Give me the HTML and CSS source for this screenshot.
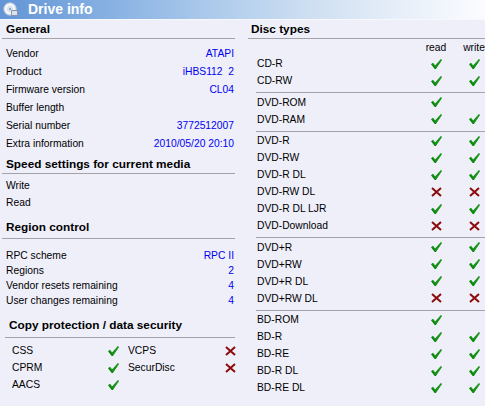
FILE: index.html
```html
<!DOCTYPE html>
<html>
<head>
<meta charset="utf-8">
<link rel="stylesheet" href="styles.css">
</head>
<body>
<svg class="defs" width="0" height="0">
  <symbol id="ok" viewBox="0 0 11 10">
    <path d="M0,5.3 L2,3.8 L4.1,6.4 L9.9,0 L11,1.1 L4.9,10 L3.7,10 Z" fill="#0a850a"/>
    <path d="M1,5.2 L2,4.6 L4.2,7.4 L9.9,1 L10.3,1.3 L4.5,9" fill="none" stroke="#2aa82a" stroke-width="0.6"/>
  </symbol>
  <symbol id="no" viewBox="0 0 11 10">
    <path d="M1,1 L10,9 M10,1 L1,9" stroke="#8c0a0a" stroke-width="2" fill="none"/>
  </symbol>
</svg>
<div class="titlebar">
  <svg class="ticon" width="15" height="15" viewBox="0 0 15 15">
    <circle cx="7" cy="7" r="6.2" fill="#f2f5fa" stroke="#b5c5da" stroke-width="1"/>
    <circle cx="7" cy="7" r="2.4" fill="none" stroke="#c9d5e4" stroke-width="1"/>
    <circle cx="7" cy="7" r="1.2" fill="#8ea4c2"/>
    <rect x="8.5" y="8.5" width="6" height="5" fill="#dbe2ec" stroke="#8496ad" stroke-width="1"/>
  </svg>
  <span class="title">Drive info</span>
</div>
<div class="main">
  <div class="left">
    <div class="hdr">General</div>
    <div class="rows r18 pt5">
      <div class="kv"><span>Vendor</span><span class="val">ATAPI</span></div>
      <div class="kv"><span>Product</span><span class="val">iHBS112  2</span></div>
      <div class="kv"><span>Firmware version</span><span class="val">CL04</span></div>
      <div class="kv"><span>Buffer length</span><span class="val"></span></div>
      <div class="kv"><span>Serial number</span><span class="val">3772512007</span></div>
      <div class="kv"><span>Extra information</span><span class="val">2010/05/20 20:10</span></div>
    </div>
    <div class="hdr mt3">Speed settings for current media</div>
    <div class="rows r17 pt3">
      <div class="kv"><span>Write</span><span class="val"></span></div>
      <div class="kv"><span>Read</span><span class="val"></span></div>
    </div>
    <div class="hdr mt7 h20">Region control</div>
    <div class="rows r15 pt9">
      <div class="kv"><span>RPC scheme</span><span class="val">RPC II</span></div>
      <div class="kv"><span>Regions</span><span class="val">2</span></div>
      <div class="kv"><span>Vendor resets remaining</span><span class="val">4</span></div>
      <div class="kv"><span>User changes remaining</span><span class="val">4</span></div>
    </div>
    <div class="hdr mt8 h21 indent">Copy protection / data security</div>
    <div class="cp">
      <span class="cpl">CSS</span><svg class="ic"><use href="#ok"/></svg><span class="cpl2">VCPS</span><svg class="ic ic2"><use href="#no"/></svg>
      <span class="cpl">CPRM</span><svg class="ic"><use href="#ok"/></svg><span class="cpl2">SecurDisc</span><svg class="ic ic2"><use href="#no"/></svg>
      <span class="cpl">AACS</span><svg class="ic"><use href="#ok"/></svg>
    </div>
  </div>
  <div class="right">
    <div class="hdr rhdr">Disc types</div>
    <div class="dgrid head"><span></span><span class="c">read</span><span class="c">write</span></div>
    <div class="grp">
      <div class="dgrid"><span>CD-R</span><svg class="ic"><use href="#ok"/></svg><svg class="ic"><use href="#ok"/></svg></div>
      <div class="dgrid"><span>CD-RW</span><svg class="ic"><use href="#ok"/></svg><svg class="ic"><use href="#ok"/></svg></div>
    </div>
    <div class="grp sep">
      <div class="dgrid"><span>DVD-ROM</span><svg class="ic"><use href="#ok"/></svg><span></span></div>
      <div class="dgrid"><span>DVD-RAM</span><svg class="ic"><use href="#ok"/></svg><svg class="ic"><use href="#ok"/></svg></div>
    </div>
    <div class="grp sep">
      <div class="dgrid"><span>DVD-R</span><svg class="ic"><use href="#ok"/></svg><svg class="ic"><use href="#ok"/></svg></div>
      <div class="dgrid"><span>DVD-RW</span><svg class="ic"><use href="#ok"/></svg><svg class="ic"><use href="#ok"/></svg></div>
      <div class="dgrid"><span>DVD-R DL</span><svg class="ic"><use href="#ok"/></svg><svg class="ic"><use href="#ok"/></svg></div>
      <div class="dgrid"><span>DVD-RW DL</span><svg class="ic"><use href="#no"/></svg><svg class="ic"><use href="#no"/></svg></div>
      <div class="dgrid"><span>DVD-R DL LJR</span><svg class="ic"><use href="#ok"/></svg><svg class="ic"><use href="#ok"/></svg></div>
      <div class="dgrid"><span>DVD-Download</span><svg class="ic"><use href="#no"/></svg><svg class="ic"><use href="#no"/></svg></div>
    </div>
    <div class="grp sep">
      <div class="dgrid"><span>DVD+R</span><svg class="ic"><use href="#ok"/></svg><svg class="ic"><use href="#ok"/></svg></div>
      <div class="dgrid"><span>DVD+RW</span><svg class="ic"><use href="#ok"/></svg><svg class="ic"><use href="#ok"/></svg></div>
      <div class="dgrid"><span>DVD+R DL</span><svg class="ic"><use href="#ok"/></svg><svg class="ic"><use href="#ok"/></svg></div>
      <div class="dgrid"><span>DVD+RW DL</span><svg class="ic"><use href="#no"/></svg><svg class="ic"><use href="#no"/></svg></div>
    </div>
    <div class="grp sep">
      <div class="dgrid"><span>BD-ROM</span><svg class="ic"><use href="#ok"/></svg><span></span></div>
      <div class="dgrid"><span>BD-R</span><svg class="ic"><use href="#ok"/></svg><svg class="ic"><use href="#ok"/></svg></div>
      <div class="dgrid"><span>BD-RE</span><svg class="ic"><use href="#ok"/></svg><svg class="ic"><use href="#ok"/></svg></div>
      <div class="dgrid"><span>BD-R DL</span><svg class="ic"><use href="#ok"/></svg><svg class="ic"><use href="#ok"/></svg></div>
      <div class="dgrid"><span>BD-RE DL</span><svg class="ic"><use href="#ok"/></svg><svg class="ic"><use href="#ok"/></svg></div>
    </div>
  </div>
</div>
</body>
</html>
```
FILE: styles.css
```css
html, body {
  margin: 0;
  padding: 0;
}
body {
  width: 485px;
  height: 406px;
  overflow: hidden;
  background: #efeffa;
  font-family: "Liberation Sans", Arial, sans-serif;
  font-size: 10.3px;
  color: #000;
}
.defs {
  position: absolute;
  width: 0;
  height: 0;
}
.titlebar {
  height: 19px;
  border-bottom: 1px solid #f6f8fd;
  background: linear-gradient(90deg, #6394d5 0%, #86b0e2 22%, #b4cfed 48%, #cfe0f2 65%, #e6eef9 82%, #fbfcff 100%);
  display: flex;
  align-items: center;
}
.ticon {
  margin-left: 3px;
}
.title {
  margin-left: 10px;
  color: #fff;
  font-weight: bold;
  font-size: 14px;
  line-height: 19px;
}
.main {
  display: flex;
}
.left {
  margin-left: 2px;
  width: 233px;
}
.right {
  margin-left: 13px;
  width: 237px;
}
.hdr {
  height: 18px;
  line-height: 18px;
  font-weight: bold;
  font-size: 11.8px;
  padding-left: 4px;
  border-bottom: 1px solid #a2a2a8;
}
.h20 { height: 20px; }
.h21 { height: 21px; }
.mt3 { margin-top: 3px; }
.mt7 { margin-top: 7px; }
.mt8 { margin-top: 8px; }
.indent {
  margin-left: 3px;
  padding-left: 4px;
}
.pt3 { padding-top: 3px; }
.pt5 { padding-top: 5px; }
.pt9 { padding-top: 9px; }
.rows {
  padding-left: 4px;
  padding-right: 1px;
}
.kv {
  display: flex;
  justify-content: space-between;
  align-items: center;
}
.r18 .kv { height: 18px; }
.r17 .kv { height: 17px; }
.r15 .kv { height: 15px; }
.val {
  color: #0000f0;
  white-space: pre;
}
.cp {
  padding-top: 4px;
  display: grid;
  grid-template-columns: 106px 11px 9px 97px 11px;
  grid-auto-rows: 17px;
  align-items: center;
}
.cp .cpl {
  grid-column: 1;
  padding-left: 10px;
}
.cp .cpl2 {
  grid-column: 4;
}
.cp .ic {
  grid-column: 2;
}
.cp .ic2 {
  grid-column: 5;
}
.ic {
  width: 11px;
  height: 10px;
  display: block;
}
.rhdr {
  padding-left: 3px;
}
.dgrid {
  display: grid;
  grid-template-columns: 1fr 38px 22px;
  column-gap: 8px;
  height: 17px;
  align-items: center;
  padding-left: 9px;
}
.dgrid .ic {
  justify-self: center;
}
.dgrid.head {
  height: 16px;
}
.c {
  text-align: center;
  white-space: nowrap;
}
.sep {
  margin-left: 8px;
  border-top: 1px solid #a2a2a8;
  margin-top: 3px;
  padding-top: 0.5px;
}
.sep .dgrid {
  padding-left: 1px;
}
```
